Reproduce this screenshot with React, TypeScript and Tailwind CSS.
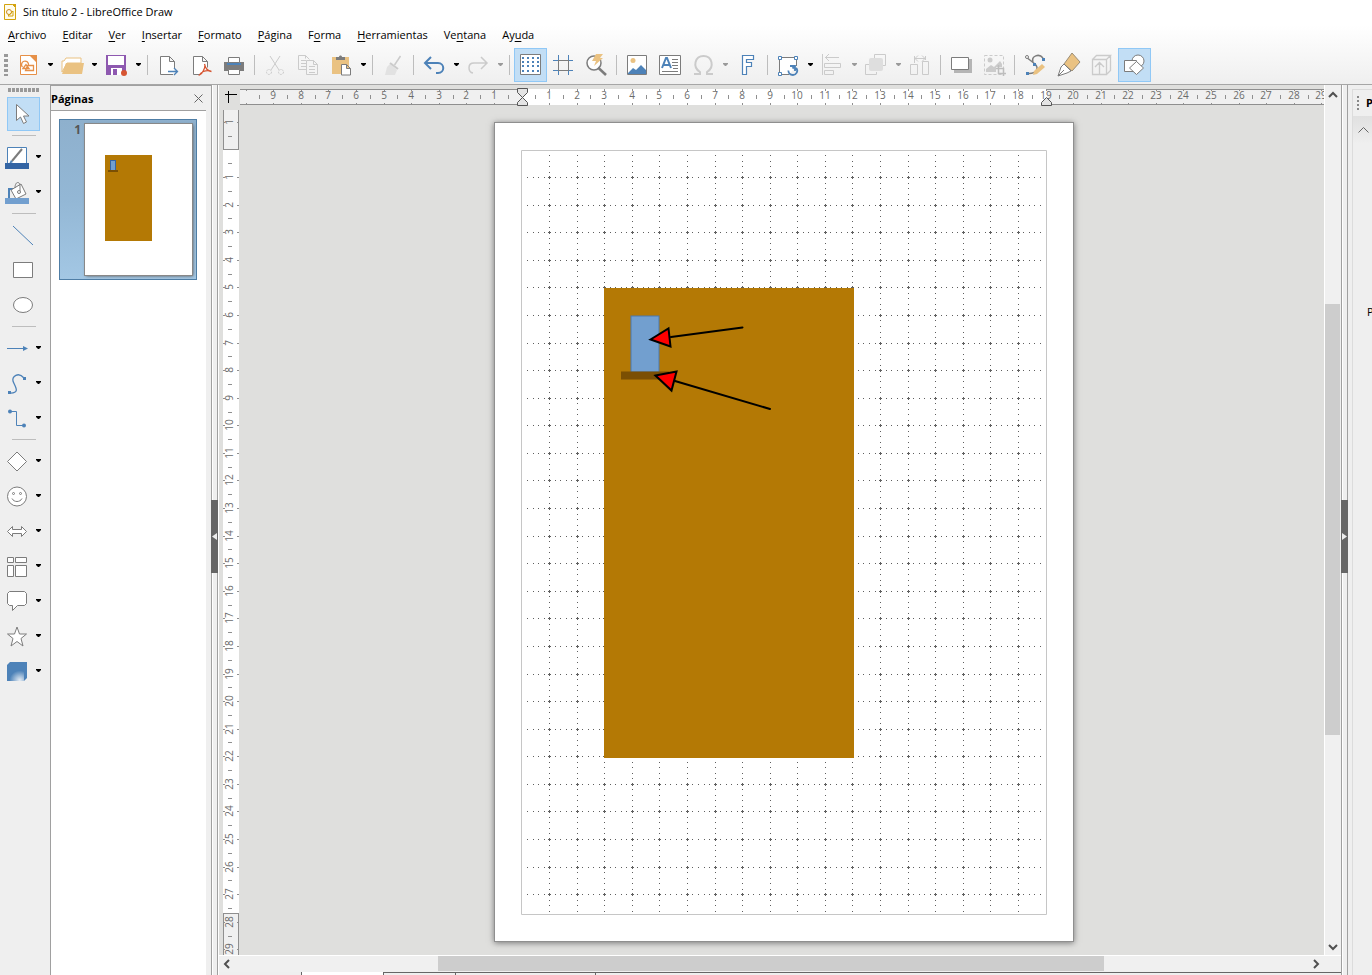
import type { ReactNode } from "react"

const CM = 27.58
const GRAY = "#7c7c7c"
const BLUE = "#4d82b8"
const OFF = "#cbcbcb"
const SAND = "#eac282"

interface ToolProps {
    label: string
    icon: ReactNode
    active?: boolean
    menu?: boolean
    disabled?: boolean
}

const menus = [
    ["", "A", "rchivo"],
    ["", "E", "ditar"],
    ["", "V", "er"],
    ["", "I", "nsertar"],
    ["", "F", "ormato"],
    ["", "P", "ágina"],
    ["F", "o", "rma"],
    ["", "H", "erramientas"],
    ["Ve", "n", "tana"],
    ["Ay", "u", "da"],
]

const icons = {
    new: <>
        <path d="M8.5 7.5h10l6 6v13h-16z" fill="#fff" stroke="#e69048" />
        <path d="M17 7h8v8z" fill="#e69048" />
        <path d="M11 20.5l3-4 3 4zM10.5 19a3.5 3.5 0 1 1 6-2M15.5 17.5h6v5h-8l2-5" fill="none" stroke="#e69048" strokeWidth="1.3" />
    </>,
    open: <>
        <path d="M6 24V13h2l2-3h15v5h-14z" fill="#fff" stroke={SAND} />
        <path d="M6 26l4-11h18l-2 11z" fill={SAND} />
    </>,
    save: <>
        <path d="M6 7h20v20H6z" fill="#8e59b0" />
        <path d="M8 8h16v9H8zM11 20h11v7H11z" fill="#fff" />
        <path d="M13 21h4v6h-4z" fill="#8e59b0" />
        <circle cx="24" cy="25" r="3" fill="#d65532" />
    </>,
    export: <>
        <path d="M21 26.5H8.5v-18h9l5 5v7M17.5 8.5v5h5" fill="#fff" stroke={GRAY} />
        <path d="M16 23.5h9M22 20l3.5 3.5L22 27" fill="none" stroke={BLUE} strokeWidth="1.3" />
    </>,
    pdf: <>
        <path d="M15 26.5H8.5v-18h9l5 5v6M17.5 8.5v5h5" fill="#fff" stroke={GRAY} />
        <path d="M19.5 16c1 5 3 7 7 7.5M20 17c0 4-3 9-5.5 10 1-3 6-5 11-4" fill="none" stroke="#d65532" strokeWidth="1.3" />
    </>,
    print: <>
        <path d="M6 14h20v9H6z" fill={GRAY} />
        <path d="M10.5 9.5h11v5h-11zM10.5 21.5h11v5h-11z" fill="#fff" stroke={GRAY} />
        <path d="M9 15h14v2H9z" fill={BLUE} />
    </>,
    cut: <>
        <path d="M11 8l9 14M21 8l-9 14" fill="none" stroke={OFF} />
        <g fill="none" stroke={OFF} strokeDasharray="2 1"><circle cx="10" cy="24" r="2.5" /><circle cx="22" cy="24" r="2.5" /></g>
    </>,
    copy: <>
        <path d="M14 21.5H6.5v-14h7l4 4" fill="none" stroke={OFF} />
        <path d="M13.5 7.5v3M9 12.5h5M9 15.5h5M9 18.5h5" stroke={OFF} />
        <path d="M14.5 12.5h7l4 4v10h-11zM21.5 12.5v4h4M17 18.5h6M17 21.5h6M17 24.5h6" fill="#f4f4f4" stroke={OFF} />
    </>,
    paste: <>
        <path d="M7 9h17v17H7z" fill={SAND} />
        <path d="M11 9h3c0-2 3-2 3 0h3v3h-9z" fill={GRAY} />
        <path d="M16.5 16.5h5l4 4v6.5h-9zM21.5 16.5v4h4" fill="#fff" stroke={GRAY} />
    </>,
    brush: <>
        <path d="M13 16l7 6-2 5H8l2-8z" fill="#e2e2e2" />
        <path d="M23.5 8l-6 9" stroke={OFF} strokeWidth="1.5" />
        <path d="M13 15l8 6" stroke={OFF} strokeWidth="2" />
    </>,
    undo: <path d="M13 9l-6 6 6 6M7.5 15H20c7 0 7 10 0 10h-2" fill="none" stroke={BLUE} strokeWidth="2" />,
    redo: <path d="M19 9l6 6-6 6M24.5 15H12c-7 0-6 9-1 10" fill="none" stroke={OFF} strokeWidth="1.5" />,
    grid: <>
        <path d="M6.5 6.5h20v20h-20z" fill="#fff" stroke={GRAY} />
        <path d="M8 10h17M8 14h17M8 18h17M8 23h17" stroke={BLUE} strokeWidth="2" strokeDasharray="2 3" />
    </>,
    guides: <>
        <path d="M6 12.5h20M6 22.5h20" stroke={BLUE} />
        <path d="M11.5 7v20M21.5 7v20" stroke={GRAY} />
        <path d="M11.5 12.5h10M11.5 22.5h10" stroke={GRAY} />
        <path d="M11.5 7v5M21.5 7v5M11.5 23v4M21.5 23v4" stroke={BLUE} />
    </>,
    zoom: <>
        <circle cx="14" cy="15" r="7" fill="#fff" stroke={GRAY} strokeWidth="1.5" />
        <path d="M18 19.5l8 7.5" stroke={GRAY} strokeWidth="2.5" />
        <path d="M16 6h7l-3 4h3l-9 8 2-5h-4z" fill={SAND} />
    </>,
    image: <>
        <path d="M6.5 7.5h19v19h-19z" fill="#fff" stroke={GRAY} />
        <circle cx="12" cy="12.5" r="2.5" fill={SAND} />
        <path d="M7 25l5-5 3 2 5-5 5 5v4H7z" fill={BLUE} />
    </>,
    text: <>
        <path d="M5.5 7.5h21v19h-21z" fill="#fff" stroke={GRAY} />
        <path d="M8 20l4-10h1l4 10M9.5 17h6" fill="none" stroke={BLUE} strokeWidth="2" />
        <path d="M18 11.5h6M18 14.5h6M18 17.5h6M19 20.5h5M8 23.5h16" stroke={GRAY} />
    </>,
    omega: <path d="M7 26h6v-2c-8-5-5-16 3.5-16s11.5 11 3.5 16v2h6" fill="none" stroke={OFF} strokeWidth="2" />,
    fontwork: <path d="M11.5 7.5h11v4h-7v3h5v4h-5v8h-4z" fill="#fff" stroke={BLUE} strokeWidth="1.2" />,
    rotate: <>
        <path d="M24.5 18V9.500h-17v17H17" fill="#fff" stroke={GRAY} />
        <path d="M6.5 8.5h3v3h-3zM22.5 8.500h3v3h-3zM6.500 24.500h3v3h-3z" fill="#fff" stroke={BLUE} />
        <path d="M24 20c3 3 0 7-3 7-3 0-5-2-4.500-4.500M18 18h5v5M22.500 18.500l-2 2" fill="none" stroke={BLUE} strokeWidth="1.800" />
    </>,
    align: <path d="M6.5 6v21M9 9.5h14M13 6l-3.500 3.500L13 13M8.5 15.500h16v4h-16zM8.5 22.500h9v4h-9z" fill="none" stroke={OFF} />,
    arrange: <>
        <path d="M14.5 11V6.500h11v11H23M11 16.500H5.500v10h11V24" fill="none" stroke={OFF} />
        <rect x="9" y="10" width="14" height="13" rx="2" fill="#dedede" />
    </>,
    distribute: <path d="M6.5 16.5h7v10h-7zM18.5 13.5h6v13h-6zM10.5 8v7M21.5 8v4M11 10.5h10M14 7.5l-3 3 3 3M18 7.5l3 3-3 3" fill="none" stroke={OFF} />,
    shadow: <>
        <path d="M9 11h18v14H9z" fill="#b5b5b5" />
        <path d="M6.5 9.5h17v12h-17z" fill="#fff" stroke={GRAY} />
    </>,
    crop: <>
        <path d="M6.5 7.5h19v19h-19z" fill="none" stroke={OFF} strokeDasharray="3 2" />
        <circle cx="12" cy="12" r="2.5" fill={OFF} />
        <path d="M8 21l5-4 3 2 6-6 2 3v3h-6v5H8z" fill={OFF} />
        <path d="M20.5 17v8.5H28M18 20.5h7.5V28" fill="none" stroke="#bdbdbd" strokeWidth="1.5" />
    </>,
    points: <>
        <path d="M7 9l9 7c4 4 2 10-7 9.5M14 14c-2-6 6-9 10-4" fill="none" stroke={GRAY} strokeWidth="1.5" />
        <circle cx="8" cy="9" r="1.5" fill="#fff" stroke={GRAY} />
        <path d="M23 10h3v3h-3zM14 15h3v3h-3zM7 24h3v3H7z" fill={BLUE} />
        <path d="M14 27l1-4 8-7 3 3-8 7z" fill={SAND} />
    </>,
    pen: <>
        <path d="M20 5l8 9-8 9-8-7z" fill={SAND} stroke="#9b8d76" />
        <path d="M12 16l7 7-4 2-9 3 3-9zM6 28l6-6" fill="#fff" stroke={GRAY} />
    </>,
    extrude: <path d="M7.5 11.5h14v15h-14zM7.5 11.5l4-4h14l-4 4M25.5 7.5v15l-4 4M14.5 26V15M10 19l4.500-4.500L19 19" fill="none" stroke={OFF} strokeWidth="1.3" />,
    shapes: <>
        <circle cx="20" cy="13" r="6" fill="#fff" stroke={GRAY} />
        <path d="M6.5 12.5h12v11h-12z" fill="#fff" stroke={GRAY} />
        <path d="M18.5 13.5l7 6.500-7 6.500-7-6.500z" fill="#fff" stroke={GRAY} />
    </>,
}

const draw = {
    select: <path d="M9.5 7.5v16l4-3.500 3 6.500 3-1.500-3-6h5.500z" fill="#fff" stroke={GRAY} />,
    lineColor: <>
        <path d="M7.5 7.5h19v17h-19z" fill="#fff" stroke={BLUE} />
        <path d="M22 9L12 21" stroke={GRAY} strokeWidth="2" />
        <path d="M9 24l2-4 2 2z" fill={BLUE} />
        <path d="M5 23h24v6H5z" fill="#3465a4" />
    </>,
    fillColor: <>
        <path d="M9 23v-9h5" fill="none" stroke={BLUE} strokeWidth="2" />
        <path d="M11 15l10-6 5 10-10 5z" fill="#fff" stroke={GRAY} />
        <path d="M15 13c0-7 5-7 5-2v5" fill="none" stroke={GRAY} />
        <circle cx="19" cy="17" r="1.500" fill="#fff" stroke={GRAY} />
        <path d="M5 23h24v6H5z" fill="#729fcf" />
    </>,
    line: <path d="M6 8l20 19" stroke={BLUE} />,
    rect: <path d="M6.5 9.5h19v15h-19z" fill="#fff" stroke={GRAY} />,
    ellipse: <ellipse cx="16" cy="17" rx="9.500" ry="7.500" fill="#fff" stroke={GRAY} />,
    arrow: <>
        <path d="M7 17.500h17" stroke={BLUE} />
        <path d="M23 15l5 2.500-5 2.500z" fill={BLUE} />
    </>,
    curve: <>
        <path d="M9 27c13 1 5-8 4-12s5-10 11-3" fill="none" stroke={BLUE} strokeWidth="1.300" />
        <path d="M8 25h3v3H8zM23 11h3v3h-3z" fill={BLUE} />
    </>,
    connector: <>
        <path d="M9 10.500h7.500v14H24" fill="none" stroke={BLUE} />
        <circle cx="10" cy="10.500" r="2" fill={BLUE} />
        <circle cx="24" cy="24.500" r="2" fill={BLUE} />
    </>,
    diamond: <path d="M17 8l9.500 9.500L17 27l-9.500-9.500z" fill="#fff" stroke={GRAY} />,
    smile: <>
        <circle cx="17" cy="17.500" r="9.500" fill="#fff" stroke={GRAY} />
        <circle cx="13.500" cy="14.500" r="1" fill="none" stroke={GRAY} />
        <circle cx="20.500" cy="14.500" r="1" fill="none" stroke={GRAY} />
        <path d="M12 19.500c2 4 8 4 10 0" fill="none" stroke={GRAY} />
    </>,
    blockArrow: <path d="M7.5 17.500l5-5v3h9v-3l5 5-5 5v-3h-9v3z" fill="#fff" stroke={GRAY} />,
    flow: <path d="M7.5 8.5h6v5h-6zM15.5 8.500h11v5h-11zM7.500 16.500h6v11h-6zM15.500 16.500h11v11h-11z" fill="#fff" stroke={GRAY} />,
    callout: <path d="M9.5 7.500h15l2 2v10l-2 2h-7l-5 5v-5h-3l-2-2v-10z" fill="#fff" stroke={GRAY} />,
    star: <path d="M17 8l2.500 7h7l-5.500 4.500 2 7.500-6-4.500-6 4.500 2-7.500-5.500-4.500h7z" fill="#fff" stroke={GRAY} />,
    cube: <>
        <defs>
            <radialGradient id="shine" cx="0.75" cy="0.95" r="0.6">
                <stop offset="0" stopColor="#e4ecf4" />
                <stop offset="1" stopColor={BLUE} />
            </radialGradient>
        </defs>
        <path d="M7 11l3-3h17v16l-3 3H7z" fill={BLUE} />
        <path d="M7 11h17v16H7z" fill="url(#shine)" />
    </>,
}

const toolbar: ToolProps[][] = [
    [
        { label: "Nuevo", icon: icons.new, menu: true },
        { label: "Abrir", icon: icons.open, menu: true },
        { label: "Guardar", icon: icons.save, menu: true },
    ],
    [
        { label: "Exportar", icon: icons.export },
        { label: "Exportar a PDF", icon: icons.pdf },
        { label: "Imprimir", icon: icons.print },
    ],
    [
        { label: "Cortar", icon: icons.cut, disabled: true },
        { label: "Copiar", icon: icons.copy, disabled: true },
        { label: "Pegar", icon: icons.paste, menu: true },
    ],
    [{ label: "Clonar formato", icon: icons.brush, disabled: true }],
    [
        { label: "Deshacer", icon: icons.undo, menu: true },
        { label: "Rehacer", icon: icons.redo, menu: true, disabled: true },
    ],
    [
        { label: "Cuadrícula", icon: icons.grid, active: true },
        { label: "Guías", icon: icons.guides },
        { label: "Escala", icon: icons.zoom },
    ],
    [
        { label: "Imagen", icon: icons.image },
        { label: "Cuadro de texto", icon: icons.text },
        { label: "Carácter especial", icon: icons.omega, menu: true, disabled: true },
        { label: "Fontwork", icon: icons.fontwork },
    ],
    [
        { label: "Transformaciones", icon: icons.rotate, menu: true },
        { label: "Alinear", icon: icons.align, menu: true, disabled: true },
        { label: "Organizar", icon: icons.arrange, menu: true, disabled: true },
        { label: "Distribuir", icon: icons.distribute, disabled: true },
    ],
    [
        { label: "Sombra", icon: icons.shadow },
        { label: "Recortar", icon: icons.crop, disabled: true },
    ],
    [
        { label: "Editar puntos", icon: icons.points },
        { label: "Puntos de adhesión", icon: icons.pen },
        { label: "Extrusión", icon: icons.extrude, disabled: true },
        { label: "Funciones de dibujo", icon: icons.shapes, active: true },
    ],
]

const drawbar: ToolProps[][] = [
    [{ label: "Seleccionar", icon: draw.select, active: true }],
    [
        { label: "Color de línea", icon: draw.lineColor, menu: true },
        { label: "Color de relleno", icon: draw.fillColor, menu: true },
    ],
    [
        { label: "Línea", icon: draw.line },
        { label: "Rectángulo", icon: draw.rect },
        { label: "Elipse", icon: draw.ellipse },
    ],
    [
        { label: "Líneas y flechas", icon: draw.arrow, menu: true },
        { label: "Curvas", icon: draw.curve, menu: true },
        { label: "Conectores", icon: draw.connector, menu: true },
    ],
    [
        { label: "Formas básicas", icon: draw.diamond, menu: true },
        { label: "Símbolos", icon: draw.smile, menu: true },
        { label: "Flechas de bloque", icon: draw.blockArrow, menu: true },
        { label: "Diagrama de flujo", icon: draw.flow, menu: true },
        { label: "Llamadas", icon: draw.callout, menu: true },
        { label: "Estrellas", icon: draw.star, menu: true },
        { label: "Objetos 3D", icon: draw.cube, menu: true },
    ],
]

function Tool({ label, icon, active, menu, disabled }: ToolProps) {
    return (
        <div className="flex">
            <button
                aria-label={label}
                disabled={disabled}
                className={active ? "h-[34px] w-[33px] bg-[#c2def5] outline -outline-offset-1 outline-[#90c8f6]" : "h-[34px] w-[33px]"}
            >
                <svg width="33" height="34" viewBox="0 0 33 34">{icon}</svg>
            </button>
            {menu &&
                <button aria-label={`${label}, opciones`} disabled={disabled} className="h-[34px] w-[11px]">
                    <svg width="11" height="34" viewBox="0 0 11 34">
                        <path d="M3 15h5v1L6 18H5L3 16z" fill={disabled ? "#9a9a9a" : "#000"} />
                    </svg>
                </button>
            }
        </div>
    )
}

function range(from: number, to: number) {
    return Array.from({ length: to - from + 1 }, (_, i) => from + i)
}

// zero of both rulers sits on the page margin
function HorizontalRuler() {
    const zero = 282
    const end = 807
    return (
        <svg className="h-[21px] min-w-0 flex-1" fontSize="10" fill="#6b6b6b" textAnchor="middle">
            <rect x="0" y="4" width="100%" height="16" fill="#8f8f8f" />
            <rect x="0" y="5" width="100%" height="14" fill="#f0f0f0" />
            <rect x={zero} y="4" width={end - zero} height="16" fill="#fff" />
            {range(-10, 29).map((n) => {
                const x = Math.floor(zero + n * CM)
                return (
                    <g key={n}>
                        <path d={`M${x} 4h1v2h-1zM${x} 18h1v2h-1zM${Math.floor(zero + (n + 0.5) * CM)} 10h1v4h-1z`} fill="#8f8f8f" />
                        {n !== 0 && n !== -10 && <text x={x} y="14">{Math.abs(n)}</text>}
                    </g>
                )
            })}
            <path d="M277.500 3.500h10v4l-5 5-5-5zM277.500 20.500h10v-3l-5-5-5 5z" fill="#e4e4e4" stroke="#555" />
            <path d="M801.500 20.500h10v-3l-5-5-5 5z" fill="#e4e4e4" stroke="#555" />
        </svg>
    )
}

function VerticalRuler() {
    const zero = 44
    return (
        <svg className="h-full w-[21px] shrink-0" fontSize="10" fill="#6b6b6b" textAnchor="middle">
            <rect x="4" y="4" width="16" height="100%" fill="#8f8f8f" />
            <rect x="5" y="4" width="14" height="100%" fill="#f0f0f0" />
            <rect x="4" y="43" width="16" height="765" fill="#8f8f8f" />
            <rect x="4" y="44" width="16" height="763" fill="#fff" />
            {range(-1, 29).map((n) => {
                const y = Math.floor(zero + n * CM)
                return (
                    <g key={n}>
                        {n !== 0 && <path d={`M4 ${y}h2v1h-2zM18 ${y}h2v1h-2z`} fill="#8f8f8f" />}
                        {n < 29 && <path d={`M9 ${Math.floor(zero + (n + 0.5) * CM)}h4v1h-4z`} fill="#8f8f8f" />}
                        {n !== 0 && <text transform={`translate(14 ${y}) rotate(-90)`}>{Math.abs(n)}</text>}
                    </g>
                )
            })}
        </svg>
    )
}

function gridPath() {
    let d = ""
    const step = CM / 5
    for (let row = 1; row < 139; row++) {
        for (let col = 1; col < 95; col++) {
            if (row % 5 !== 0 && col % 5 !== 0) continue
            const x = Math.floor(27 + col * step)
            const y = Math.floor(27 + row * step)
            d += `M${x} ${y}h1v1h-1z`
            if (row % 5 === 0 && col % 5 === 0) d += `M${x - 1} ${y}h3v1h-3zM${x} ${y - 1}h1v3h-1z`
        }
    }
    return d
}

function Page() {
    return (
        <svg
            className="absolute left-[255px] top-[17px] bg-white shadow-[0_1px_6px_1px_#777] outline outline-[#8f8f8f]"
            width="578"
            height="818"
            viewBox="0 0 578 818"
        >
            <path d="M26.5 27.500h525v764h-525z" fill="none" stroke="#c6c6c6" />
            <path d={gridPath()} fill="#5f5f5f" shapeRendering="crispEdges" />
            <rect x="109" y="165" width="250" height="470" fill="#b47905" />
            <rect x="136" y="193" width="28" height="56" fill="#729fcf" stroke="#4a78ae" />
            <rect x="126" y="248.500" width="48" height="8" fill="#7b4f03" />
            <g stroke="#000" strokeWidth="2" strokeLinecap="round">
                <path d="M247.500 204.500L176 214" />
                <path d="M155.500 216.500l18-11 2 18z" fill="#f00" />
                <path d="M275 286L180 258" />
                <path d="M160.500 252.500l21-4-5 19z" fill="#f00" />
            </g>
        </svg>
    )
}

function ScrollArrow({ label, d }: { label: string; d: string }) {
    return (
        <button aria-label={label} className="size-4 shrink-0">
            <svg width="16" height="16" viewBox="0 0 16 16">
                <path d={d} fill="none" stroke="#505050" strokeWidth="2" />
            </svg>
        </button>
    )
}

function Splitter({ direction }: { direction: "left" | "right" }) {
    return (
        <div className="relative w-[7px] shrink-0 border-x border-[#a0a0a0] bg-[#efefef] shadow-[inset_1px_0_#fff]">
            <button
                aria-label={direction === "left" ? "Ocultar páginas" : "Ocultar barra lateral"}
                className="absolute top-[415px] -left-px h-[73px] w-[7px] bg-[#666]"
            >
                <svg width="7" height="73" viewBox="0 0 7 73">
                    <path d={direction === "left" ? "M6 33v7l-5-3.500z" : "M1 33v7l5-3.500z"} fill="#eee" />
                </svg>
            </button>
        </div>
    )
}

function PagesPanel() {
    return (
        <aside className="flex w-[160px] shrink-0 flex-col">
            <div className="flex h-[25px] items-center justify-between border-t border-[#a0a0a0] pr-[7px]">
                <h2 className="pt-0.5 font-bold">Páginas</h2>
                <button aria-label="Cerrar">
                    <svg width="11" height="11" viewBox="0 0 11 11">
                        <path d="M1.500 1.500l8 8M9.500 1.500l-8 8" stroke="#666" />
                    </svg>
                </button>
            </div>
            <div className="mr-[5px] flex-1 border-t border-[#a0a0a0] bg-white px-2 pt-2">
                <button className="flex h-[161px] w-[138px] border border-[#4f7ea6] bg-linear-to-b from-[#8eb0cd] via-[#93b7d5] to-[#a3c7e4] pt-1">
                    <span className="w-[25px] pr-1 text-right text-xs leading-3 font-bold text-[#555]">1</span>
                    <svg className="bg-white shadow-[1px_1px_3px_#555] outline outline-[#888]" width="107" height="151" viewBox="0 0 107 151">
                        <rect x="20" y="31" width="47" height="86" fill="#b47905" />
                        <rect x="25.500" y="36.500" width="5" height="10" fill="#729fcf" stroke="#3465a4" />
                        <rect x="23" y="46" width="10" height="2" fill="#7b4f03" />
                    </svg>
                </button>
            </div>
        </aside>
    )
}

export default function App() {
    return (
        <div className="flex h-screen flex-col overflow-hidden bg-[#efefef] font-['Open_Sans','Noto_Sans',sans-serif] text-[11px] text-black">
            <header className="border-b border-[#a6a6a6] bg-linear-to-b from-white from-30% to-[#efefef]">
                <div className="flex h-6 items-center gap-1.5 pl-1">
                    <svg width="13" height="18" viewBox="0 0 13 18">
                        <path d="M.5 1.500h8l3 3v12H.5z" fill="#fffbe9" stroke="#d3a20c" />
                        <path d="M8 1h4v4z" fill="#d3a20c" />
                        <circle cx="5" cy="9" r="2.500" fill="none" stroke="#c88a1c" />
                        <path d="M4 13h5V8z" fill="none" stroke="#d3a20c" />
                    </svg>
                    <h1>Sin título 2 - LibreOffice Draw</h1>
                </div>
                <nav className="flex h-[22px] items-center">
                    {menus.map(([before, key, after]) => (
                        <button key={key + after} className="px-2">
                            {before}<span className="underline underline-offset-2">{key}</span>{after}
                        </button>
                    ))}
                </nav>
                <div role="toolbar" aria-label="Estándar" className="flex h-[38px] items-center">
                    <div className="mx-1 h-[22px] w-1 bg-[repeating-linear-gradient(#999_0_3px,transparent_3px_5px)]" />
                    {toolbar.map((group, i) => (
                        <div key={i} className="flex items-center">
                            {i > 0 && <div className="mr-1 ml-[3px] h-5 w-px bg-[#bdbdbd]" />}
                            {group.map((tool) => <Tool key={tool.label} {...tool} />)}
                        </div>
                    ))}
                </div>
            </header>
            <div className="flex min-h-0 flex-1">
                <div role="toolbar" aria-label="Dibujo" className="w-[51px] shrink-0 border-r border-[#a0a0a0]">
                    <div className="mt-[3px] mb-[5px] ml-2 h-[4px] w-[31px] bg-[repeating-linear-gradient(90deg,#999_0_3px,transparent_3px_4px)]" />
                    {drawbar.map((group, i) => (
                        <div key={i}>
                            {i > 0 && <div className="mt-[3px] mb-1 ml-3 h-px w-6 bg-[#bdbdbd]" />}
                            {group.map((tool) => (
                                <div key={tool.label} className={tool.menu ? "h-[35px]" : "h-[35px] pl-[7px]"}>
                                    <Tool {...tool} />
                                </div>
                            ))}
                        </div>
                    ))}
                </div>
                <PagesPanel />
                <Splitter direction="left" />
                <main className="flex min-w-0 flex-1 flex-col border-l border-white">
                    <div className="flex min-h-0 flex-1">
                        <div className="flex min-w-0 flex-1 flex-col bg-[#dfdfdd]">
                            <div className="flex">
                                <svg className="shrink-0" width="21" height="21" viewBox="0 0 21 21">
                                    <path d="M6 9.500h12M9.500 6v12" stroke="#000" />
                                </svg>
                                <HorizontalRuler />
                            </div>
                            <div className="flex min-h-0 flex-1">
                                <VerticalRuler />
                                <div className="relative min-w-0 flex-1 overflow-hidden">
                                    <Page />
                                </div>
                            </div>
                        </div>
                        <div className="flex w-[17px] flex-col border-l border-white bg-[#f0f0f0]">
                            <ScrollArrow label="Arriba" d="M4 12l4-4 4 4" />
                            <div className="flex flex-1 flex-col">
                                <div className="flex-[203]" />
                                <div className="mr-px flex-[431] bg-[#cdcdcd]" />
                                <div className="flex-[204]" />
                            </div>
                            <ScrollArrow label="Abajo" d="M4 6l4 4 4-4" />
                        </div>
                    </div>
                    <div className="flex h-[17px] border-t border-white bg-[#f0f0f0] pr-[17px]">
                        <ScrollArrow label="Izquierda" d="M10 4L6 8l4 4" />
                        <div className="flex flex-1">
                            <div className="flex-[203]" />
                            <div className="mb-px flex-[666] bg-[#cdcdcd]" />
                            <div className="flex-[204]" />
                        </div>
                        <ScrollArrow label="Derecha" d="M6 4l4 4-4 4" />
                    </div>
                    <div className="flex h-[3px]">
                        <div className="w-[82px]" />
                        <div className="w-[82px] border-l border-[#666] bg-white" />
                        <div className="w-[72px] border-t border-l border-[#666]" />
                        <div className="w-[140px] border-t border-l border-[#666]" />
                        <div className="flex-1 border-t border-l border-[#666]" />
                    </div>
                </main>
                <Splitter direction="right" />
                <aside className="w-6 shrink-0 overflow-hidden pt-1 pl-1">
                    <div className="h-full border-t border-l border-[#dcdcdc]">
                        <div className="flex h-[26px] items-center gap-[7px] pl-1 font-bold">
                            <div className="h-[14px] w-0.5 shrink-0 bg-[repeating-linear-gradient(#888_0_2px,transparent_2px_4px)]" />
                            <h2>P</h2>
                        </div>
                        <div className="flex h-[28px] items-center bg-linear-to-b from-[#e0e0e0] to-[#efefef] pl-1">
                            <button aria-label="Contraer">
                                <svg width="13" height="8" viewBox="0 0 13 8">
                                    <path d="M1.500 6.500l5-5 5 5" fill="none" stroke="#666" />
                                </svg>
                            </button>
                        </div>
                        <p className="pt-[160px] pl-[14px]">P</p>
                    </div>
                </aside>
            </div>
        </div>
    )
}
